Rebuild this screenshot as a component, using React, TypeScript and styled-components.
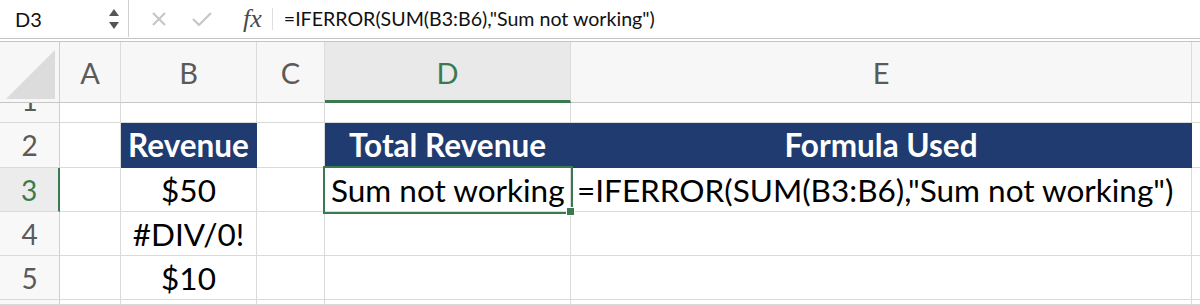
import React from 'react';
import styled, { createGlobalStyle, css } from 'styled-components';

const GREEN = '#3b7a50';
const NAVY = '#1f3b70';
const GRID = '#dadada';

const GlobalStyle = createGlobalStyle`
  html, body {
    margin: 0;
    padding: 0;
    background: #ffffff;
  }
  body {
    font-family: Lato, "Open Sans", sans-serif;
    overflow: hidden;
  }
`;

const Page = styled.div`
  width: 1200px;
  height: 305px;
  overflow: hidden;
  background: #fff;
`;

const FormulaBar = styled.div`
  display: flex;
  align-items: stretch;
  height: 42px;
  box-sizing: border-box;
  border-bottom: 4px double #c4c4c4;
  background: #fff;
`;

const NameBox = styled.div`
  display: flex;
  align-items: center;
  justify-content: space-between;
  width: 129px;
  height: 37px;
  box-sizing: border-box;
  padding: 0 8px 0 15px;
  border-right: 1px solid #cfcfcf;
  font-size: 20px;
  color: #111;
`;

const Tools = styled.div`
  display: flex;
  align-items: center;
  height: 37px;
  padding-left: 22px;
  gap: 24px;
`;

const FxLabel = styled.span`
  font-family: "Liberation Serif", "DejaVu Serif", serif;
  font-style: italic;
  font-size: 26px;
  color: #4a4a4a;
  margin-left: 6px;
`;

const Divider = styled.span`
  width: 1px;
  height: 22px;
  background: #dedede;
  margin-left: -14px;
`;

const FormulaText = styled.div`
  display: flex;
  align-items: center;
  height: 37px;
  padding-left: 11px;
  font-size: 19.6px;
  color: #111;
  white-space: nowrap;
`;

const Sheet = styled.div`
  display: grid;
  grid-template-columns: 60px 61px 136px 68px 246px 621px 1fr;
  grid-template-rows: 61px 20px 45px 44px 44px 44px 1fr;
  height: 263px;
`;

const Corner = styled.div`
  display: flex;
  align-items: flex-end;
  justify-content: flex-end;
  padding: 0 4px 3px 0;
  background: #f7f7f7;
  border-right: 1px solid #cfcfcf;
  border-bottom: 1px solid #c6c6c6;
`;

const CornerTriangle = styled.div`
  width: 49px;
  height: 49px;
  background: #dcdcdc;
  clip-path: polygon(100% 0, 100% 100%, 0 100%);
`;

const ColHeader = styled.div<{ $active?: boolean }>`
  display: flex;
  align-items: center;
  justify-content: center;
  box-sizing: border-box;
  background: #f7f7f7;
  border-right: 1px solid #dcdcdc;
  border-bottom: 1px solid #c6c6c6;
  font-size: 29px;
  color: #5a5a5a;
  ${(p) =>
    p.$active &&
    css`
      background: #e9e9e9;
      color: ${GREEN};
      border-bottom: 3px solid ${GREEN};
      padding-top: 2px;
    `}
`;

type Clip = 'top' | 'bottom' | undefined;

const RowHeader = styled.div<{ $active?: boolean; $clip?: Clip }>`
  display: flex;
  align-items: ${(p) => (p.$clip === 'top' ? 'flex-end' : p.$clip === 'bottom' ? 'flex-start' : 'center')};
  justify-content: center;
  overflow: hidden;
  box-sizing: border-box;
  background: #f8f8f8;
  border-right: 1px solid #cfcfcf;
  border-bottom: 1px solid ${GRID};
  font-size: 28px;
  color: #5a5a5a;
  ${(p) =>
    p.$active &&
    css`
      background: #ececec;
      color: ${GREEN};
      border-right: 2px solid ${GREEN};
    `}
`;

const RowLabel = styled.span`
  display: block;
  line-height: 44px;
  flex-shrink: 0;
`;

const Cell = styled.div<{ $fill?: boolean; $align?: 'left' | 'center'; $selected?: boolean }>`
  position: relative;
  display: flex;
  align-items: center;
  justify-content: ${(p) => (p.$align === 'left' ? 'flex-start' : 'center')};
  box-sizing: border-box;
  padding: 0 6px;
  border-right: 1px solid ${GRID};
  border-bottom: 1px solid ${GRID};
  font-size: 31.5px;
  color: #000;
  white-space: nowrap;
  ${(p) =>
    p.$fill &&
    css`
      background: ${NAVY};
      border-color: ${NAVY};
      color: #fff;
      font-weight: 700;
    `}
  ${(p) =>
    p.$selected &&
    css`
      outline: 2px solid ${GREEN};
      outline-offset: 0px;
      z-index: 1;
      &::after {
        content: '';
        position: absolute;
        right: -5px;
        bottom: -5px;
        width: 7px;
        height: 7px;
        background: ${GREEN};
        border: 1px solid #fff;
      }
    `}
`;

type CellData = { text?: string; fill?: boolean; align?: 'left' | 'center'; selected?: boolean };

const columns = ['A', 'B', 'C', 'D', 'E', ''];
const FORMULA = '=IFERROR(SUM(B3:B6),"Sum not working")';

const rows: { n: number; clip?: Clip; cells: Record<string, CellData> }[] = [
  { n: 1, clip: 'top', cells: {} },
  {
    n: 2,
    cells: {
      B: { text: 'Revenue', fill: true },
      D: { text: 'Total Revenue', fill: true },
      E: { text: 'Formula Used', fill: true },
    },
  },
  {
    n: 3,
    cells: {
      B: { text: '$50' },
      D: { text: 'Sum not working', align: 'left', selected: true },
      E: { text: FORMULA, align: 'left' },
    },
  },
  { n: 4, cells: { B: { text: '#DIV/0!' } } },
  { n: 5, cells: { B: { text: '$10' } } },
  { n: 6, clip: 'bottom', cells: {} },
];

const Spinner = () => (
  <svg width="12" height="24" viewBox="0 0 12 24">
    <path d="M6 2 L11 9 L1 9 Z" fill="#555" />
    <path d="M1 15 L11 15 L6 22 Z" fill="#555" />
  </svg>
);

const CancelIcon = () => (
  <svg width="16" height="16" viewBox="0 0 16 16">
    <path d="M2 2 L14 14 M14 2 L2 14" stroke="#c6c6c6" strokeWidth="2.2" fill="none" />
  </svg>
);

const CheckIcon = () => (
  <svg width="22" height="16" viewBox="0 0 22 16">
    <path d="M2 8 L8 14 L20 2" stroke="#c6c6c6" strokeWidth="2.2" fill="none" />
  </svg>
);

export default function App() {
  return (
    <Page>
      <GlobalStyle />
      <FormulaBar>
        <NameBox>
          <span>D3</span>
          <Spinner />
        </NameBox>
        <Tools>
          <CancelIcon />
          <CheckIcon />
          <FxLabel>fx</FxLabel>
          <Divider />
        </Tools>
        <FormulaText>{FORMULA}</FormulaText>
      </FormulaBar>
      <Sheet>
        <Corner>
          <CornerTriangle />
        </Corner>
        {columns.map((c, i) => (
          <ColHeader key={`h${i}`} $active={c === 'D'}>
            {c}
          </ColHeader>
        ))}
        {rows.map((row) => (
          <React.Fragment key={row.n}>
            <RowHeader $active={row.n === 3} $clip={row.clip}>
              {row.clip !== 'bottom' && <RowLabel>{row.n}</RowLabel>}
            </RowHeader>
            {columns.map((c, i) => {
              const d = row.cells[c] || {};
              return (
                <Cell key={`${row.n}-${i}`} $fill={d.fill} $align={d.align} $selected={d.selected}>
                  {d.text}
                </Cell>
              );
            })}
          </React.Fragment>
        ))}
      </Sheet>
    </Page>
  );
}
